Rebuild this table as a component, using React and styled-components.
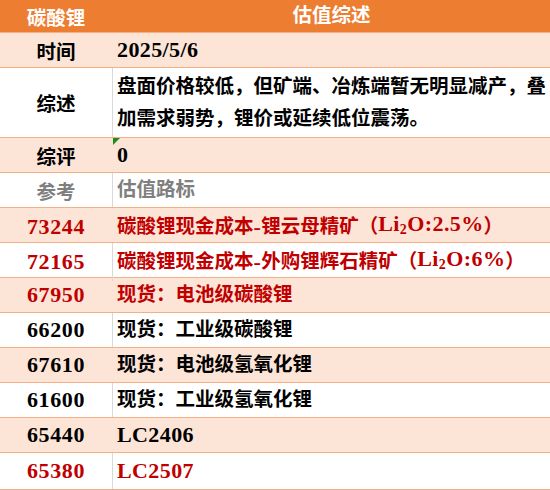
import React from 'react';
import styled, { createGlobalStyle } from 'styled-components';

const colours = {
	header: '#ED7D31',
	shade: '#FCE4D6',
	line: '#F4B084',
	grid: '#D9D9D9',
	red: '#C00000',
	grey: '#7F7F7F',
	black: '#000000',
};

const GlobalStyle = createGlobalStyle`
	html, body {
		margin: 0;
		padding: 0;
		background: #fff;
	}
	body {
		font-family: 'Liberation Serif', 'Noto Sans CJK SC', serif;
	}
`;

const Sheet = styled.div`
	width: 550px;
	height: 490px;
	overflow: hidden;
	background: #fff;
	font-weight: 700;
	font-size: 19.5px;
`;

const Row = styled.div`
	display: grid;
	grid-template-columns: 113px 1fr;
	height: ${p => p.$h || 34}px;
	background: ${p => p.$head ? colours.header : p.$shade ? colours.shade : '#fff'};
	border-bottom: 1px solid ${colours.line};
	color: ${p => p.$tone === 'red' ? colours.red : p.$tone === 'grey' ? colours.grey : p.$head ? '#fff' : colours.black};
`;

const Label = styled.div`
	display: flex;
	align-items: center;
	justify-content: center;
	border-right: 1px solid ${p => p.$line ? colours.grid : 'transparent'};
	font-size: ${p => p.$num ? '22px' : 'inherit'};
	letter-spacing: ${p => p.$num ? '0.6px' : '0'};
`;

const Value = styled.div`
	position: relative;
	display: flex;
	align-items: center;
	justify-content: ${p => p.$center ? 'center' : 'flex-start'};
	padding-left: ${p => p.$center ? 0 : 4}px;
	line-height: 32px;
`;

const Text = styled.div`
	line-height: 32px;
	padding-right: 2px;
`;

const Lat = styled.span`
	font-size: 22px;
	letter-spacing: 0.4px;
	sub {
		font-size: 14px;
		vertical-align: -3px;
	}
`;

const Flag = styled.span`
	position: absolute;
	top: 0;
	left: 0;
	width: 0;
	height: 0;
	border-top: 7px solid #1E8C1E;
	border-right: 7px solid transparent;
`;

const rows = [
	{ num: '73244', tone: 'red', text: <>碳酸锂现金成本<Lat>-</Lat>锂云母精矿（<Lat>Li<sub>2</sub>O:2.5%</Lat>）</> },
	{ num: '72165', tone: 'red', text: <>碳酸锂现金成本<Lat>-</Lat>外购锂辉石精矿（<Lat>Li<sub>2</sub>O:6%</Lat>）</> },
	{ num: '67950', tone: 'red', text: '现货：电池级碳酸锂' },
	{ num: '66200', text: '现货：工业级碳酸锂' },
	{ num: '67610', text: '现货：电池级氢氧化锂' },
	{ num: '61600', text: '现货：工业级氢氧化锂' },
	{ num: '65440', text: <Lat>LC2406</Lat> },
	{ num: '65380', tone: 'red', text: <Lat>LC2507</Lat> },
];

const App = () => (
	<>
		<GlobalStyle />
		<Sheet>
			<Row $head $h={32}>
				<Label>碳酸锂</Label>
				<Value $center>估值综述</Value>
			</Row>
			<Row $shade>
				<Label>时间</Label>
				<Value><Lat>2025/5/6</Lat></Value>
			</Row>
			<Row $h={69}>
				<Label $line>综述</Label>
				<Value>
					<Text>盘面价格较低，但矿端、冶炼端暂无明显减产，叠加需求弱势，锂价或延续低位震荡。</Text>
				</Value>
			</Row>
			<Row $shade>
				<Label>综评</Label>
				<Value><Flag /><Lat>0</Lat></Value>
			</Row>
			<Row $tone="grey">
				<Label $line>参考</Label>
				<Value>估值路标</Value>
			</Row>
			{rows.map((r, i) => (
				<Row key={r.num} $shade={i % 2 === 0} $tone={r.tone} $h={i === rows.length - 1 ? 36 : 34}>
					<Label $num $line={i % 2 === 1}>{r.num}</Label>
					<Value>{r.text}</Value>
				</Row>
			))}
		</Sheet>
	</>
);

export default App;
